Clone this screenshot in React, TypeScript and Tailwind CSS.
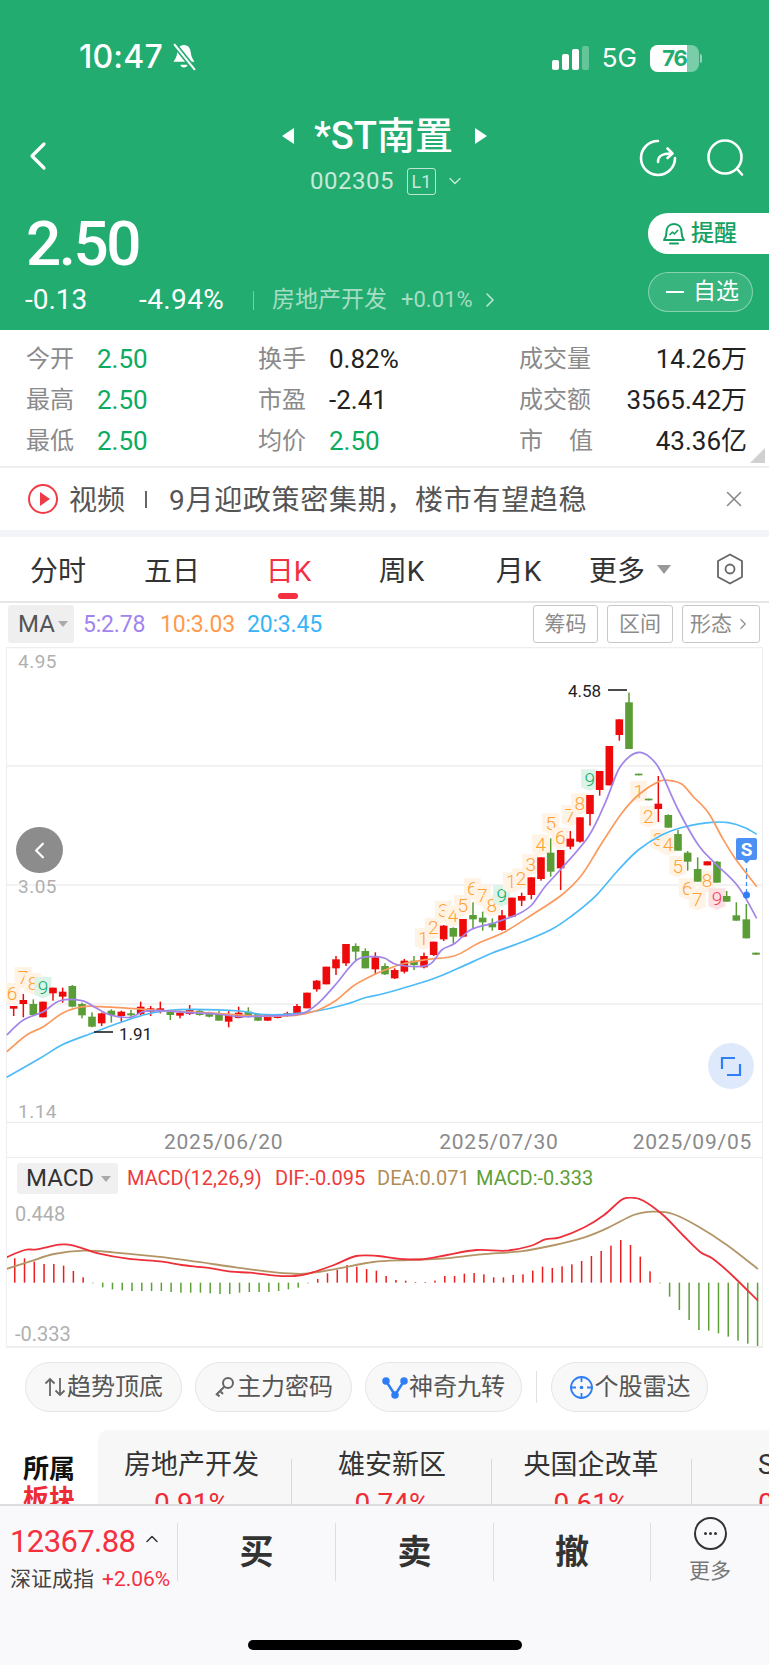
import React from "react";
import { ChevronLeft, ChevronRight, ChevronDown, ChevronUp, X } from "lucide-react";

type Pt = [number, number];
// candle: x, wick top, wick bottom, body top, body bottom, colour (r / g), read off the picture at 3x
type Candle = [number, number, number, number, number, "r" | "g"];

const RED = "#ee0a0a";
const GREEN = "#5a9c36";

const candlesLeft: Candle[] = [
  [41, 378, 408, 378, 386, "r"], [70, 342, 412, 360, 372, "r"], [100, 358, 408, 372, 405, "g"], [129, 365, 412, 365, 412, "r"],
  [159, 323, 362, 323, 340, "r"], [188, 323, 368, 335, 350, "r"], [217, 315, 382, 318, 380, "g"], [246, 368, 415, 372, 406, "g"],
  [276, 397, 442, 410, 440, "g"], [305, 398, 438, 400, 430, "r"], [334, 388, 428, 392, 405, "g"], [364, 392, 425, 395, 408, "r"],
  [393, 390, 410, 400, 406, "g"], [422, 365, 408, 380, 402, "r"], [452, 378, 408, 385, 395, "r"], [481, 365, 400, 385, 393, "r"],
  [511, 393, 420, 395, 405, "g"], [540, 392, 415, 398, 407, "r"], [569, 375, 405, 390, 402, "r"], [599, 390, 407, 392, 405, "g"],
  [628, 395, 412, 398, 410, "g"], [657, 393, 422, 400, 422, "g"], [686, 393, 442, 402, 425, "r"], [716, 380, 415, 398, 414, "r"],
  [745, 382, 412, 395, 408, "g"], [774, 400, 423, 402, 422, "g"], [803, 402, 423, 405, 422, "r"], [833, 403, 415, 405, 414, "r"],
  [862, 395, 410, 400, 408, "r"], [891, 372, 405, 378, 400, "r"], [921, 338, 385, 338, 385, "r"], [950, 300, 335, 302, 328, "r"],
  [979, 260, 313, 260, 313, "r"], [1008, 228, 285, 238, 265, "r"], [1038, 192, 258, 192, 250, "r"], [1067, 190, 240, 198, 215, "g"],
  [1096, 205, 265, 213, 265, "g"], [1126, 217, 282, 232, 268, "r"], [1155, 250, 285, 258, 283, "g"],
];

const candlesRight: Candle[] = [
  [29, 925, 957, 930, 955, "r"], [58, 897, 940, 902, 935, "r"], [87, 888, 930, 902, 915, "g"], [117, 878, 925, 888, 922, "r"],
  [146, 845, 888, 845, 885, "r"], [176, 795, 843, 797, 838, "r"], [205, 802, 850, 804, 830, "g"], [234, 777, 832, 777, 830, "r"],
  [264, 727, 805, 765, 778, "g"], [293, 755, 812, 773, 787, "g"], [322, 775, 812, 790, 802, "g"], [351, 750, 812, 766, 810, "r"],
  [381, 713, 772, 713, 770, "r"], [410, 698, 738, 708, 722, "r"], [439, 652, 718, 652, 705, "r"], [468, 592, 662, 592, 657, "r"],
  [497, 535, 650, 578, 635, "g"], [527, 570, 690, 570, 625, "r"], [556, 513, 568, 536, 560, "r"], [585, 472, 548, 472, 545, "r"],
  [615, 405, 497, 405, 462, "r"], [644, 333, 407, 333, 390, "r"], [673, 258, 376, 258, 376, "r"], [703, 178, 242, 178, 225, "r"],
  [732, 98, 267, 127, 267, "g"], [761, 341, 346, 341, 346, "g"], [791, 416, 421, 416, 421, "g"], [820, 348, 486, 431, 447, "r"],
  [850, 463, 503, 465, 503, "g"], [879, 510, 572, 522, 572, "g"], [908, 573, 632, 578, 605, "g"], [938, 592, 665, 627, 665, "g"],
  [967, 604, 616, 604, 616, "r"], [996, 603, 668, 605, 668, "g"], [1025, 693, 725, 708, 725, "g"], [1054, 727, 782, 766, 782, "g"],
  [1084, 732, 835, 778, 835, "g"], [1113, 878, 884, 878, 884, "g"],
];

const leftX = (x: number) => x / 3;
const leftY = (y: number) => 880 + y / 3;
const rightX = (x: number) => 385 + x / 3;
const rightY = (y: number) => 660 + y / 3;

const allCandles: Candle[] = [
  ...candlesLeft.map((c): Candle => [leftX(c[0]), leftY(c[1]), leftY(c[2]), leftY(c[3]), leftY(c[4]), c[5]]),
  ...candlesRight.map((c): Candle => [rightX(c[0]), rightY(c[1]), rightY(c[2]), rightY(c[3]), rightY(c[4]), c[5]]),
];

function join(a: Pt[], b: Pt[]): Pt[] {
  return [...a.map(([x, y]): Pt => [leftX(x), leftY(y)]), ...b.map(([x, y]): Pt => [rightX(x), rightY(y)])];
}

const ma5 = join(
  [[20, 465], [70, 420], [130, 395], [180, 362], [245, 362], [290, 385], [330, 405], [390, 412], [430, 395], [480, 392], [570, 398], [650, 402], [720, 410], [800, 408], [880, 405], [920, 395], [960, 365], [1010, 310], [1070, 240], [1125, 230]],
  [[0, 895], [40, 915], [130, 915], [170, 870], [210, 850], [260, 808], [330, 788], [400, 762], [440, 735], [480, 680], [530, 625], [610, 530], [660, 430], [700, 330], [735, 288], [765, 277], [795, 292], [825, 330], [880, 450], [940, 555], [990, 610], [1060, 680], [1115, 775]],
);
const ma10 = join(
  [[20, 515], [80, 465], [130, 440], [190, 398], [250, 380], [300, 380], [430, 388], [540, 395], [650, 400], [760, 408], [860, 408], [920, 400], [960, 388], [1010, 360], [1060, 318], [1120, 285]],
  [[0, 930], [60, 910], [130, 898], [210, 887], [280, 850], [360, 815], [440, 765], [530, 705], [590, 645], [650, 550], [710, 460], [760, 405], [820, 365], [850, 361], [890, 372], [925, 410], [970, 458], [1010, 530], [1050, 595], [1115, 680]],
);
const ma20 = join(
  [[20, 592], [120, 535], [190, 493], [280, 458], [340, 435], [430, 405], [500, 392], [580, 388], [720, 393], [780, 403], [860, 403], [950, 393], [1030, 375], [1100, 352], [1155, 340]],
  [[140, 958], [220, 925], [320, 880], [420, 843], [500, 808], [560, 768], [630, 710], [700, 630], [760, 570], [830, 525], [900, 500], [980, 487], [1030, 488], [1080, 503], [1115, 523]],
);

// TD sequence tags: x, y, digit, tone
const tdTags: [number, number, string, string][] = [
  [12, 993, "6", "o"], [23, 977, "7", "o"], [33, 983, "8", "o"], [43, 987, "9", "g"],
  ...([
    [115, 835, "1", "o"], [145, 803, "2", "o"], [175, 752, "3", "o"], [204, 767, "4", "o"], [233, 735, "5", "o"], [262, 685, "6", "o"], [292, 705, "7", "o"], [320, 735, "8", "o"], [350, 705, "9", "g"],
    [379, 665, "1", "o"], [408, 655, "2", "o"], [437, 612, "3", "o"], [467, 553, "4", "o"], [497, 490, "5", "o"], [526, 533, "6", "o"], [555, 465, "7", "o"], [584, 430, "8", "o"], [614, 358, "9", "g"],
    [761, 393, "1", "o"], [790, 468, "2", "o"], [820, 537, "3", "o"], [849, 552, "4", "o"], [878, 618, "5", "o"], [907, 685, "6", "o"], [937, 717, "7", "o"], [966, 662, "8", "o"], [996, 715, "9", "p"],
  ] as [number, number, string, string][]).map(([x, y, d, t]): [number, number, string, string] => [rightX(x), rightY(y), d, t]),
];

const tagStyle: Record<string, { bg: string; fg: string }> = {
  o: { bg: "#fff3e6", fg: "#ffa033" },
  g: { bg: "#dcf3e8", fg: "#12ad6a" },
  p: { bg: "#fde0e3", fg: "#f5405a" },
};

// MACD bars: bottom/top end of every bar in the crop, zero line at 398
const macdEnds = [
  325, 325, 335, 342, 342, 347, 363, 382, 400, 412, 418, 421, 423, 423, 423, 423, 426, 428, 428, 428, 430, 432, 432, 428, 426, 426, 426, 423, 418, 413, 400,
  387, 370, 360, 345, 350, 357, 362, 378, 390, 392, 396, 396, 392, 378, 378, 371, 369, 373, 382, 382, 375, 373, 362, 350, 354, 349, 343, 333, 318, 303, 287, 270, 285, 320, 364,
  400, 440, 480, 510, 540, 542, 550, 560, 572, 581, 588,
];
const mx = (x: number) => x / 2.036;
const my = (y: number) => 1150 + y / 3;
const dif: Pt[] = ([[13, 322], [50, 300], [75, 298], [120, 284], [140, 284], [170, 296], [200, 310], [260, 326], [330, 335], [370, 345], [420, 353], [470, 365], [510, 368], [560, 377], [600, 378], [630, 370], [680, 345], [725, 318], [770, 318], [810, 326], [860, 328], [910, 315], [970, 300], [1030, 302], [1080, 288], [1110, 268], [1140, 262], [1190, 232], [1230, 195], [1265, 150], [1285, 143], [1310, 152], [1350, 195], [1390, 255], [1425, 305], [1450, 325], [1490, 375], [1543, 452]] as Pt[]).map(([x, y]): Pt => [mx(x), my(y)]);
const dea: Pt[] = ([[13, 357], [60, 335], [110, 312], [170, 302], [230, 307], [320, 320], [400, 335], [480, 352], [560, 367], [620, 371], [680, 358], [760, 336], [830, 330], [900, 326], [980, 313], [1060, 304], [1120, 288], [1190, 262], [1240, 232], [1290, 195], [1330, 185], [1370, 192], [1420, 228], [1480, 285], [1543, 357]] as Pt[]).map(([x, y]): Pt => [mx(x), my(y)]);

// rounded line through the points
function curve(p: Pt[]) {
  let d = `M${p[0][0].toFixed(1)} ${p[0][1].toFixed(1)}`;
  for (let i = 0; i < p.length - 1; i++) {
    const a = p[Math.max(i - 1, 0)];
    const b = p[i];
    const c = p[i + 1];
    const e = p[Math.min(i + 2, p.length - 1)];
    const c1x = b[0] + (c[0] - a[0]) / 6;
    const c1y = b[1] + (c[1] - a[1]) / 6;
    const c2x = c[0] - (e[0] - b[0]) / 6;
    const c2y = c[1] - (e[1] - b[1]) / 6;
    d += `C${c1x.toFixed(1)} ${c1y.toFixed(1)} ${c2x.toFixed(1)} ${c2y.toFixed(1)} ${c[0].toFixed(1)} ${c[1].toFixed(1)}`;
  }
  return d;
}

function StatusBar() {
  return (
    <div className="h-[118px] pt-[41px] pl-[79px] pr-[67px] flex items-start justify-between text-white">
      <div className="flex items-center gap-[7px]">
        <span className="text-[32px] leading-[32px] font-medium font-[Inter,sans-serif] tracking-[0.2px]">10:47</span>
        <svg width="28" height="28" viewBox="0 0 27 27">
          <path d="M13.500 2c-4 0-6 3-6.500 7-.4 4-2 7-3.600 9h20.200c-1.600-2-3.200-5-3.600-9-.5-4-2.500-7-6.500-7z" fill="white" />
          <path d="M10 21h7c-.5 3.500-6.500 3.500-7 0z" fill="white" />
          <path d="M4 1l20 25" stroke="#22ac70" strokeWidth="5" />
          <path d="M4 1l20 25" stroke="white" strokeWidth="2" />
        </svg>
      </div>
      <div className="flex items-center gap-[13px] h-[32px] pt-[2px]">
        <div className="flex items-end gap-[3px] h-[24px]">
          <div className="w-[7px] h-[10px] rounded-[2px] bg-white" />
          <div className="w-[7px] h-[16px] rounded-[2px] bg-white" />
          <div className="w-[7px] h-[21px] rounded-[2px] bg-white" />
          <div className="w-[7px] h-[24px] rounded-[2px] bg-white/30" />
        </div>
        <span className="text-[26px] leading-[30px] font-[Inter,sans-serif]">5G</span>
        <div className="flex items-center gap-[1px]">
          <div className="relative w-[49px] h-[27px] rounded-[8px] bg-white/40 overflow-hidden">
            <div className="absolute left-0 top-0 bottom-0 w-[37px] bg-white" />
            <span className="absolute inset-0 text-center text-[22px] leading-[27px] font-bold text-[#22ac70] font-[Inter,sans-serif] tracking-[-1px]">76</span>
          </div>
          <div className="w-[2px] h-[9px] rounded-r-full bg-white/50" />
        </div>
      </div>
    </div>
  );
}

function Header() {
  return (
    <div className="h-[330px] bg-[#22ac70] text-white shrink-0">
      <StatusBar />
      <div className="h-[78px] relative flex flex-col items-center">
        <div className="flex items-center h-[36px]">
          <div className="w-0 h-0 border-y-[8px] border-y-transparent border-r-[12px] border-r-white mr-[20px]" />
          <span className="text-[38px] leading-[36px] font-medium">*ST南置</span>
          <div className="w-0 h-0 border-y-[8px] border-y-transparent border-l-[12px] border-l-white ml-[22px]" />
        </div>
        <div className="flex items-center mt-[13px] ml-[6px] text-white/75">
          <span className="text-[24px] leading-[28px] tracking-[0.5px]">002305</span>
          <span className="ml-[13px] w-[29px] h-[27px] border border-white/70 rounded-[3px] text-[18px] leading-[25px] text-center">L1</span>
          <ChevronDown size={20} strokeWidth={1.6} className="ml-[9px]" />
        </div>
        <ChevronLeft size={48} strokeWidth={1.6} className="absolute left-[14px] top-[14px]" />
        <svg className="absolute left-[639px] top-[21px]" width="38" height="38" viewBox="0 0 38 38" fill="none" stroke="white" strokeWidth="2.600" strokeLinecap="round" strokeLinejoin="round">
          <path d="M19 2A17 17 0 1 0 36 19" />
          <path d="M19 23c0-6 4-8.500 13-8.500" />
          <path d="M28.500 9.500l5 5-5 4.500" />
        </svg>
        <svg className="absolute left-[706px] top-[20px]" width="40" height="40" viewBox="0 0 40 40" fill="none" stroke="white" strokeWidth="2.600" strokeLinecap="round">
          <circle cx="19" cy="19" r="16.500" />
          <path d="M31 31l5 5.500" />
        </svg>
      </div>
      <div className="flex justify-between">
        <div className="pl-[25px] pt-[17px]">
          <div className="text-[62px] leading-[62px] font-medium pl-[1px] tracking-[-2.500px]">2.50</div>
          <div className="flex items-center mt-[13px] h-[24px]">
            <span className="w-[114px] text-[28px] leading-[24px]">-0.13</span>
            <span className="w-[114px] text-[28px] leading-[24px] tracking-[0.4px]">-4.94%</span>
            <div className="w-px h-[19px] bg-white/40" />
            <span className="ml-[18px] text-[23px] leading-[24px] text-white/60">房地产开发</span>
            <span className="ml-[14px] text-[22px] leading-[24px] text-white/60">+0.01%</span>
            <ChevronRight size={24} strokeWidth={1.6} className="ml-[5px] text-white/70" />
          </div>
        </div>
        <div className="pt-[17px] flex flex-col items-start w-[121px]">
          <div className="w-full h-[41px] bg-white rounded-l-[20px] flex items-center pl-[15px] gap-[6px] text-[#16a163]">
            <svg width="22" height="24" viewBox="0 0 22 24" fill="none" stroke="#16a163" strokeWidth="2" strokeLinejoin="round">
              <path d="M11 2c-5 0-7.500 3.500-7.500 8 0 4-1 6-2.500 8h20c-1.500-2-2.500-4-2.500-8 0-4.500-2.500-8-7.500-8z" />
              <path d="M7 21.500h8" strokeLinecap="round" />
              <path d="M6.500 13l3-3 2 2 3.500-4" strokeWidth="1.600" />
            </svg>
            <span className="text-[23px] leading-[24px] font-medium">提醒</span>
          </div>
          <div className="mt-[18px] w-[105px] h-[40px] rounded-[20px] border border-white/40 bg-white/10 flex items-center pl-[17px] gap-[9px]">
            <div className="w-[18px] h-[2.500px] bg-white" />
            <span className="text-[23px] leading-[24px]">自选</span>
          </div>
        </div>
      </div>
    </div>
  );
}

const statRows = [
  { a: "今开", av: "2.50", b: "换手", bv: "0.82%", bg: false, c: "成交量", cv: "14.26万" },
  { a: "最高", av: "2.50", b: "市盈", bv: "-2.41", bg: false, c: "成交额", cv: "3565.42万" },
  { a: "最低", av: "2.50", b: "均价", bv: "2.50", bg: true, c: "市值", cv: "43.36亿" },
];

function Stats() {
  return (
    <div className="h-[138px] shrink-0 border-b-2 border-[#eeeeee] pt-[8px] relative">
      {statRows.map((r) => (
        <div key={r.a} className="h-[41px] flex items-center pl-[26px] pr-[22px] text-[26px] leading-[30px]">
          <span className="w-[71px] text-[24px] text-[#8a8a8a]">{r.a}</span>
          <span className="w-[161px] text-[#0bab60]">{r.av}</span>
          <span className="w-[71px] text-[24px] text-[#8a8a8a]">{r.b}</span>
          <span className={`w-[190px] ${r.bg ? "text-[#0bab60]" : "text-[#222222]"}`}>{r.bv}</span>
          <span className="w-[74px] text-[24px] text-[#8a8a8a] flex justify-between">
            {r.c === "市值" ? (<><span>市</span><span>值</span></>) : r.c}
          </span>
          <span className="flex-1 text-right text-[#222222]">{r.cv}</span>
        </div>
      ))}
      <div className="absolute right-[4px] bottom-[3px] w-0 h-0 border-l-[15px] border-l-transparent border-b-[15px] border-b-[#d0d0d0]" />
    </div>
  );
}

function Notice() {
  return (
    <div className="h-[69px] shrink-0 border-b-[7px] border-[#f3f4f8] flex items-center pl-[28px] pr-[22px] text-[#555555]">
      <div className="w-[30px] h-[30px] rounded-full border-2 border-[#ef3b44] flex items-center justify-center">
        <div className="w-0 h-0 ml-[3px] border-y-[7px] border-y-transparent border-l-[10px] border-l-[#ef3b44]" />
      </div>
      <span className="ml-[11px] text-[28px] leading-[34px] pt-[3px]">视频</span>
      <div className="ml-[20px] w-[2px] h-[17px] bg-[#666666]" />
      <span className="ml-[22px] text-[28px] leading-[34px] tracking-[0.7px] pt-[3px]">9月迎政策密集期，楼市有望趋稳</span>
      <X size={26} strokeWidth={1.4} className="ml-auto text-[#888888]" />
    </div>
  );
}

function Tabs() {
  return (
    <div className="h-[66px] shrink-0 border-b-2 border-[#e6e6e6] flex items-center text-[28px] leading-[34px] text-[#333333] relative">
      <span className="w-[116px] text-center pt-[5px]">分时</span>
      <span className="w-[112px] text-center pt-[5px]">五日</span>
      <span className="w-[124px] text-center text-[#f2303f] relative pt-[5px] pr-[3px]">
        日K
        <div className="absolute left-[50px] top-[43px] w-[20px] h-[6px] rounded-full bg-[#f2303f]" />
      </span>
      <span className="w-[102px] text-center pt-[5px] pr-[3px]">周K</span>
      <span className="w-[132px] text-center pt-[5px] pr-[3px]">月K</span>
      <span className="ml-[3px] pt-[5px]">更多</span>
      <div className="ml-[12px] w-0 h-0 border-x-[7px] border-x-transparent border-t-[9px] border-t-[#999999]" />
      <svg className="ml-[45px]" width="28" height="32" viewBox="0 0 28 32" fill="none" stroke="#666666" strokeWidth="1.800">
        <path d="M14 1.500l12 6.500v16l-12 6.500-12-6.500V8z" strokeLinejoin="round" />
        <circle cx="14" cy="16" r="4.500" />
      </svg>
    </div>
  );
}

function MaBar() {
  const btn = "h-[38px] border border-[#c8c8c8] rounded-[3px] text-[21px] leading-[36px] text-[#8c8c8c] text-center";
  return (
    <div className="h-[44px] shrink-0 flex items-start pt-[2px] pl-[8px] pr-[9px]">
      <div className="w-[66px] h-[38px] bg-[#efefef] rounded-[3px] flex items-center pl-[10px] text-[24px] text-[#555555]">
        MA
        <div className="ml-[3px] w-0 h-0 border-x-[5px] border-x-transparent border-t-[6px] border-t-[#aaaaaa]" />
      </div>
      <div className="flex items-center h-[40px] text-[23px] ml-[9px] tracking-[-0.2px]">
        <span className="text-[#a184ee] w-[77px]">5:2.78</span>
        <span className="text-[#ff9a4d] w-[87px]">10:3.03</span>
        <span className="text-[#37b4f5]">20:3.45</span>
      </div>
      <div className="ml-auto flex gap-[9px]">
        <span className={`${btn} w-[65px]`}>筹码</span>
        <span className={`${btn} w-[66px]`}>区间</span>
        <span className={`${btn} w-[78px] flex items-center justify-center gap-[2px]`}>
          形态<ChevronRight size={18} strokeWidth={1.5} />
        </span>
      </div>
    </div>
  );
}

function MainChart() {
  const gridY = [647.5, 766, 885, 1004, 1122.5];
  return (
    <div className="relative mx-[6px] h-[476px] shrink-0">
      <svg className="block" width="757" height="476" viewBox="6 647 757 476">
        {gridY.map((y) => <line key={y} x1="6" x2="763" y1={y} y2={y} stroke="#eeeeee" strokeWidth="1.500" />)}
        <line x1="6.500" x2="6.500" y1="647" y2="1123" stroke="#eeeeee" />
        <line x1="762.500" x2="762.500" y1="647" y2="1123" stroke="#eeeeee" />
        <g fontFamily="Roboto,sans-serif" fontSize="19" fill="#b0b0b0" letterSpacing="0.5">
          <text x="18" y="668">4.95</text>
          <text x="18" y="893">3.05</text>
          <text x="18" y="1118">1.14</text>
        </g>
        {tdTags.map(([x, y, d, t], i) => (
          <g key={i}>
            <path d={`M${x - 8.5} ${y - 10}h17v18l-8.5 3.5l-8.5 -3.5z`} fill={tagStyle[t].bg} />
            <text x={x} y={y + 6.5} textAnchor="middle" fontFamily="Roboto,sans-serif" fontWeight="300" fontSize="19" fill={tagStyle[t].fg}>{d}</text>
          </g>
        ))}
        {allCandles.map(([x, wt, wb, bt, bb, c], i) => (
          <g key={i} fill={c === "r" ? RED : GREEN}>
            <rect x={x - 0.75} y={wt} width="1.500" height={wb - wt} />
            <rect x={x - 3.8} y={bt} width="7.600" height={Math.max(bb - bt, 1.5)} />
          </g>
        ))}
        <path d={curve(ma20)} fill="none" stroke="#4dbbf7" strokeWidth="1.700" />
        <path d={curve(ma10)} fill="none" stroke="#fb9a5f" strokeWidth="1.700" />
        <path d={curve(ma5)} fill="none" stroke="#a285ea" strokeWidth="1.700" />
        <g fontFamily="Roboto,sans-serif" fontSize="17" fill="#222222">
          <text x="568" y="697">4.58</text>
          <text x="119" y="1040">1.91</text>
        </g>
        <line x1="608" x2="627" y1="690" y2="690" stroke="#111111" strokeWidth="1.500" />
        <line x1="94" x2="113" y1="1032" y2="1032" stroke="#111111" strokeWidth="1.500" />
        <line x1="746.5" x2="746.5" y1="868" y2="895" stroke="#3e86f5" strokeWidth="1.200" strokeDasharray="4 3" />
        <circle cx="746.5" cy="895" r="3.500" fill="#2f7ef5" />
        <path d="M738 838h17a2 2 0 0 1 2 2v18a2 2 0 0 1-2 2h-5l-3.500 3.500-3.500-3.500h-5a2 2 0 0 1-2-2v-18a2 2 0 0 1 2-2z" fill="#4c8ff5" />
        <text x="746.5" y="856" textAnchor="middle" fontFamily="Roboto,sans-serif" fontWeight="700" fontSize="19" fill="white">S</text>
      </svg>
      <div className="absolute left-[10px] top-[180px] w-[47px] h-[46px] rounded-full bg-black/45 flex items-center justify-center">
        <ChevronLeft size={27} strokeWidth={2} className="text-white" />
      </div>
      <div className="absolute left-[702px] top-[396px] w-[46px] h-[46px] rounded-full bg-[#dfe9fc] flex items-center justify-center">
        <svg width="22" height="21" viewBox="0 0 22 21" fill="none" stroke="#2f7ef5" strokeWidth="2.200">
          <path d="M2 13V2h13" />
          <path d="M20 8v11H7" />
        </svg>
      </div>
    </div>
  );
}

function DateAxis() {
  return (
    <div className="h-[35px] shrink-0 mx-[6px] pt-[3px] border-x border-b border-[#eeeeee] flex items-center relative text-[21px] leading-[26px] text-[#8a8a8a] tracking-[0.75px]">
      <span className="ml-[157px]">2025/06/20</span>
      <span className="ml-[156px]">2025/07/30</span>
      <span className="ml-auto mr-[10px]">2025/09/05</span>
    </div>
  );
}

function MacdPanel() {
  return (
    <div className="mx-[6px] h-[190px] shrink-0 border-x border-b-2 border-[#eeeeee]">
      <div className="h-[39px] flex items-start pt-[5px] pl-[10px] text-[20px] leading-[31px]">
        <div className="w-[101px] h-[31px] bg-[#f0f0f0] rounded-[3px] flex items-center pl-[9px] text-[24px] text-[#333333]">
          MACD
          <div className="ml-[7px] w-0 h-0 border-x-[5px] border-x-transparent border-t-[6px] border-t-[#aaaaaa]" />
        </div>
        <span className="ml-[9px] w-[148px] text-[#ee3b3b]">MACD(12,26,9)</span>
        <span className="w-[102px] text-[#ee3b3b]">DIF:-0.095</span>
        <span className="w-[99px] text-[#b08d57]">DEA:0.071</span>
        <span className="text-[#5e9f36]">MACD:-0.333</span>
      </div>
      <svg className="block" width="755" height="149" viewBox="7 1197 755 149">
        <g fontFamily="Roboto,sans-serif" fontSize="20" fill="#b0b0b0">
          <text x="15" y="1221">0.448</text>
          <text x="15" y="1341">-0.333</text>
        </g>
        {macdEnds.map((v, i) => {
          const x = mx(30 + i * 19.9);
          const y0 = my(398);
          const y1 = my(v);
          return (
            <rect key={i} x={x - 0.75} y={Math.min(y0, y1)} width="1.500" height={Math.abs(y1 - y0)} fill={v < 398 ? "#ee1c1c" : "#5e9f36"} />
          );
        })}
        <path d={curve(dea)} fill="none" stroke="#b39465" strokeWidth="1.800" />
        <path d={curve(dif)} fill="none" stroke="#ee2f3a" strokeWidth="1.800" />
      </svg>
    </div>
  );
}

function Pill({ icon, label }: { icon: React.ReactNode; label: string }) {
  return (
    <div className="w-[157px] h-[50px] rounded-[25px] border border-[#e5e5e5] bg-[#f8f8f8] flex items-center justify-center gap-[1px] text-[24px] leading-[30px] text-[#555555]">
      {icon}
      <span>{label}</span>
    </div>
  );
}

function Pills() {
  return (
    <div className="h-[68px] shrink-0 mt-[14px] flex items-start pl-[25px]">
      <div className="flex gap-[13px]">
        <Pill label="趋势顶底" icon={
          <svg width="22" height="20" viewBox="0 0 22 20" fill="none" stroke="#666666" strokeWidth="1.800">
            <path d="M6 19V2M1.500 6.500L6 2l4.500 4.500" />
            <path d="M16 1v17M11.500 13.500L16 18l4.500-4.500" />
          </svg>
        } />
        <Pill label="主力密码" icon={
          <svg width="22" height="22" viewBox="0 0 22 22" fill="none" stroke="#666666" strokeWidth="2">
            <circle cx="14" cy="7" r="5" />
            <path d="M10.500 10.500L2 19M6 15l3 3M3 18l2.500 2.500" />
          </svg>
        } />
        <Pill label="神奇九转" icon={
          <svg width="26" height="24" viewBox="0 0 26 24" fill="none" stroke="#2f7ef5" strokeWidth="2.500">
            <path d="M4 6l9 14 9-14" />
            <circle cx="4" cy="6" r="2.500" fill="#2f7ef5" />
            <circle cx="22" cy="6" r="2.500" fill="#2f7ef5" />
            <circle cx="13" cy="20" r="2.500" fill="#2f7ef5" />
          </svg>
        } />
      </div>
      <div className="ml-[14px] mt-[9px] w-px h-[32px] bg-[#e2e2e2]" />
      <div className="ml-[14px]">
        <Pill label="个股雷达" icon={
          <svg width="25" height="25" viewBox="0 0 25 25" fill="none" stroke="#2f7ef5" strokeWidth="1.800">
            <circle cx="12.5" cy="12.5" r="10.500" />
            <path d="M12.500 1v6M12.500 18v6M1 12.500h6M18 12.500h6" />
            <circle cx="12.5" cy="12.5" r="1.800" fill="#2f7ef5" stroke="none" />
          </svg>
        } />
      </div>
    </div>
  );
}

const sectors = [
  { name: "房地产开发", pct: "0.91%", w: "w-[194px] pr-[7px]" },
  { name: "雄安新区", pct: "0.74%", w: "w-[200px]" },
  { name: "央国企改革", pct: "0.61%", w: "w-[200px] pr-[2px]" },
];

function Sectors() {
  return (
    <div className="h-[74px] shrink-0 flex overflow-hidden">
      <div className="w-[98px] shrink-0 pl-[23px] pt-[24px] text-[26px] leading-[30px] font-bold">
        <div className="text-[#111111]">所属</div>
        <div className="text-[#ee2c36]">板块</div>
      </div>
      <div className="flex-1 bg-[#f7f7f7] rounded-tl-[10px] flex pt-[18px] overflow-hidden whitespace-nowrap">
        {sectors.map((s) => (
          <div key={s.name} className={`${s.w} shrink-0 relative text-center`}>
            <div className="text-[27px] leading-[34px] text-[#333333]">{s.name}</div>
            <div className="mt-[7px] text-[28px] leading-[30px] text-[#ee2c36]">{s.pct}</div>
            <div className="absolute right-0 top-[11px] w-px h-[60px] bg-[#d8d8d8]" />
          </div>
        ))}
        <div className="shrink-0 pl-[66px]">
          <div className="text-[27px] leading-[34px] text-[#333333]">S</div>
          <div className="mt-[7px] text-[28px] leading-[30px] text-[#ee2c36]">0</div>
        </div>
      </div>
    </div>
  );
}

function BottomBar() {
  const cell = "h-[58px] flex items-center justify-center border-l border-[#dedee2] text-[34px] font-bold text-[#333333]";
  return (
    <div className="flex-1 relative bg-[#f9f9fb] border-t-2 border-[#dddddf]">
      <div className="flex pt-[17px]">
        <div className="w-[177px] shrink-0 pl-[10px]">
          <div className="flex items-center h-[30px] mt-[4px] text-[31px] leading-[30px] text-[#f5303f] tracking-[-0.6px]">
            12367.88
            <ChevronUp size={20} strokeWidth={1.8} className="ml-[7px] mb-[6px] text-[#333333]" />
          </div>
          <div className="flex items-center mt-[10px] h-[24px]">
            <span className="text-[21px] leading-[24px] text-[#444444]">深证成指</span>
            <span className="ml-[8px] text-[21px] leading-[24px] text-[#f5303f]">+2.06%</span>
          </div>
        </div>
        <div className={`${cell} w-[158px]`}>买</div>
        <div className={`${cell} w-[158px]`}>卖</div>
        <div className={`${cell} w-[157px]`}>撤</div>
        <div className="flex-1 h-[58px] border-l border-[#dedee2] flex flex-col items-center relative">
          <div className="absolute -top-[6px] w-[33px] h-[33px] rounded-full border-2 border-[#333333] flex items-center justify-center gap-[2px]">
            <div className="w-[3px] h-[3px] rounded-full bg-[#333333]" />
            <div className="w-[3px] h-[3px] rounded-full bg-[#333333]" />
            <div className="w-[3px] h-[3px] rounded-full bg-[#333333]" />
          </div>
          <span className="absolute top-[35px] text-[21px] leading-[26px] text-[#777777]">更多</span>
        </div>
      </div>
      <div className="absolute left-[248px] top-[134px] w-[274px] h-[10px] rounded-full bg-black" />
    </div>
  );
}

export default function App() {
  return (
    <div className="w-[769px] h-[1665px] flex flex-col overflow-hidden bg-white font-[Roboto,'Noto_Sans_CJK_SC',sans-serif]">
      <Header />
      <Stats />
      <Notice />
      <Tabs />
      <MaBar />
      <MainChart />
      <DateAxis />
      <MacdPanel />
      <Pills />
      <Sectors />
      <BottomBar />
    </div>
  );
}
